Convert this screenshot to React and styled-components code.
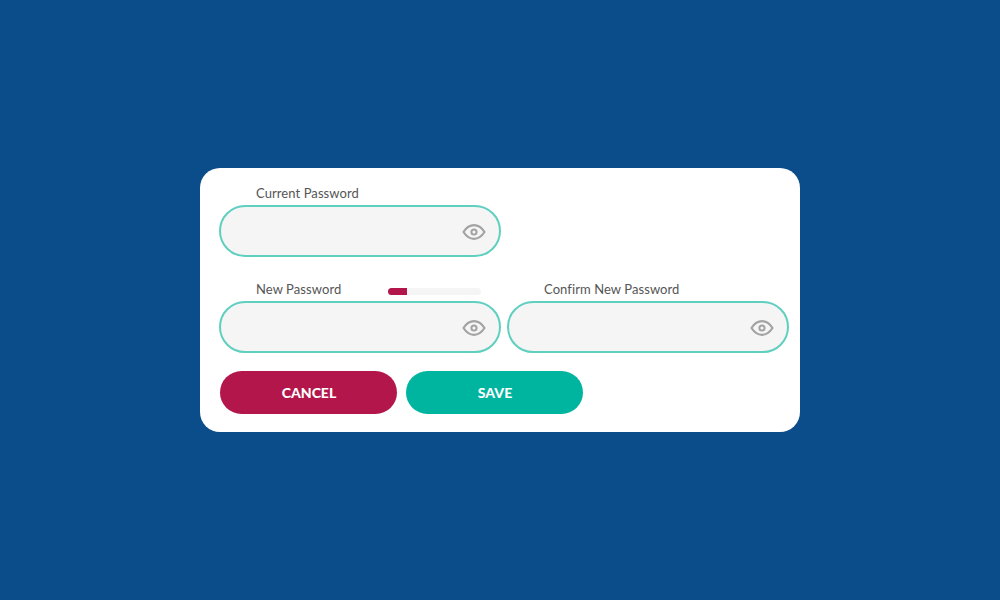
import React from "react";
import styled, { createGlobalStyle } from "styled-components";

const Global = createGlobalStyle`
  html, body { margin: 0; padding: 0; height: 100%; background: #0a4d8a; }
  #root { height: 100%; }
  * { box-sizing: border-box; }
`;

const Page = styled.div`
  width: 1000px;
  height: 600px;
  background: #0a4d8a;
  display: flex;
  align-items: center;
  justify-content: center;
  font-family: "Lato", "Liberation Sans", sans-serif;
`;

const Card = styled.form`
  width: 600px;
  height: 264px;
  background: #fff;
  border-radius: 20px;
  padding: 17px 11px 18px 19px;
  display: flex;
  flex-direction: column;
`;

const Row = styled.div`
  display: flex;
  gap: 6px;
  margin-bottom: ${(p) => p.$mb}px;
`;

const Field = styled.div`
  width: 282px;
  display: flex;
  flex-direction: column;
`;

const LabelRow = styled.div`
  height: 20px;
  display: flex;
  align-items: center;
  padding: 0 20px 4px 37px;
`;

const Label = styled.label`
  font-size: 13px;
  font-weight: 400;
  color: #555;
  letter-spacing: 0.08px;
`;

const Strength = styled.div`
  margin-left: auto;
  width: 93px;
  height: 7px;
  margin-top: 4px;
  border-radius: 4px;
  background: #f5f5f5;
  overflow: hidden;
`;

const StrengthFill = styled.div`
  height: 100%;
  background: #b3164b;
`;

const InputBox = styled.div`
  height: 52px;
  border: 2px solid #5fd0bf;
  border-radius: 26px;
  background: #f5f5f5;
  display: flex;
  align-items: center;
  justify-content: flex-end;
  padding: 2px 13px 0 0;
`;

const Eye = styled.svg`
  width: 24px;
  height: 18px;
  display: block;
`;

const Actions = styled.div`
  display: flex;
  gap: 9px;
  padding-left: 1px;
`;

const Button = styled.button`
  width: 177px;
  height: 43px;
  border: 0;
  border-radius: 22px;
  background: ${(p) => p.$bg};
  color: #fff;
  font-family: inherit;
  font-size: 14px;
  font-weight: 900;
  text-transform: uppercase;
  padding: 0 0 0 1px;
`;

const EyeIcon = () => (
  <Eye viewBox="0 0 24 18" fill="none" stroke="#a3a3a3">
    <path d="M1.5 9C4.5 4.4 8 2.2 12 2.2S19.5 4.4 22.5 9C19.5 13.6 16 15.8 12 15.8S4.5 13.6 1.5 9Z" strokeWidth="2.2" strokeLinejoin="round" />
    <circle cx="12" cy="9" r="2.6" strokeWidth="2" />
  </Eye>
);

const PasswordField = ({ label, strength }) => (
  <Field>
    <LabelRow>
      <Label>{label}</Label>
      {strength !== undefined && (
        <Strength>
          <StrengthFill style={{ width: `${strength}%` }} />
        </Strength>
      )}
    </LabelRow>
    <InputBox>
      <EyeIcon />
    </InputBox>
  </Field>
);

export default function App() {
  return (
    <Page>
      <Global />
      <Card>
        <Row $mb={24}>
          <PasswordField label="Current Password" />
        </Row>
        <Row $mb={18}>
          <PasswordField label="New Password" strength={20} />
          <PasswordField label="Confirm New Password" />
        </Row>
        <Actions>
          <Button type="button" $bg="#b3164b">Cancel</Button>
          <Button type="button" $bg="#00b5a0">Save</Button>
        </Actions>
      </Card>
    </Page>
  );
}
